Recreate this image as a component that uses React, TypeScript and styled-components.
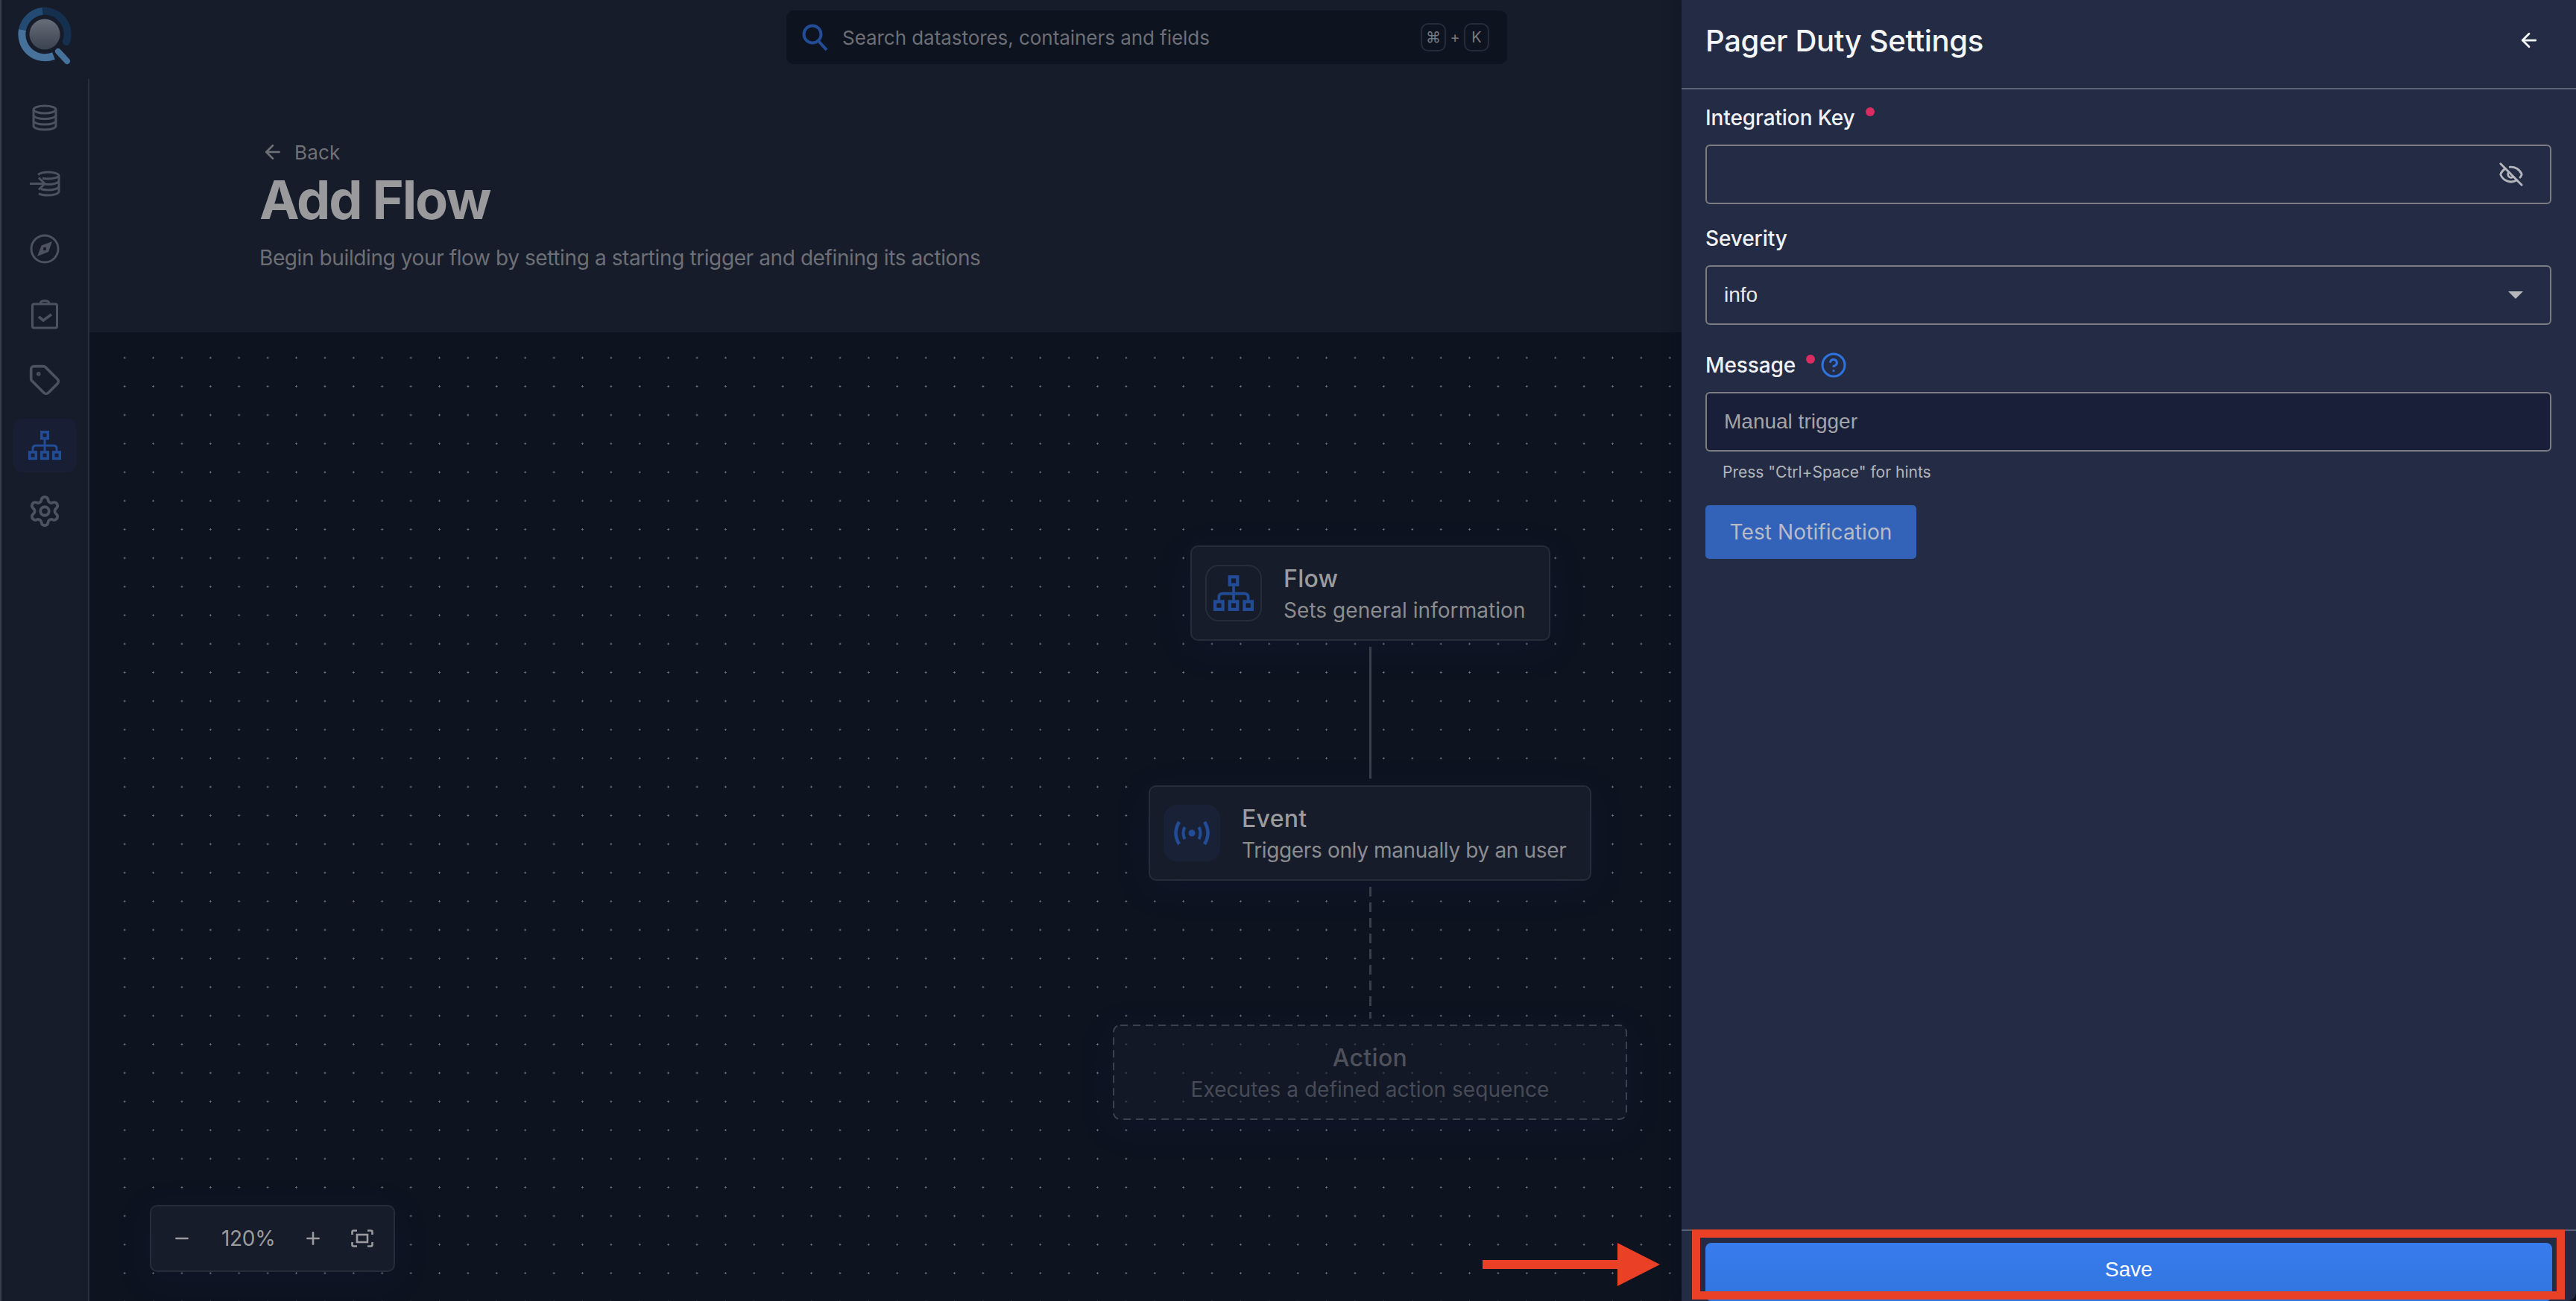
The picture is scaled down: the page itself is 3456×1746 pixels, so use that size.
import React from "react";
import styled, { createGlobalStyle } from "styled-components";
import { ArrowLeft, EyeOff, HelpCircle, Minus, Plus, Tag, Settings } from "lucide-react";

const GlobalStyle = createGlobalStyle`
  html, body {
    margin: 0;
    padding: 0;
    background: #0e1320;
  }
  * {
    box-sizing: border-box;
  }
`;

const UI_FONT = `Inter, "Noto Sans", "Liberation Sans", sans-serif`;
const FIELD_FONT = `"Liberation Sans", Arial, sans-serif`;

const SitemapIcon = ({ width = 44 }: { width?: number }) => (
  <svg width={width} height={width * 0.89} viewBox="0 0 44 39" fill="none" stroke="#234c96" strokeWidth="3.500">
    <rect x="17.750" y="1.750" width="8.500" height="8.500" />
    <rect x="1.750" y="28.750" width="8.500" height="8.500" />
    <rect x="17.750" y="28.750" width="8.500" height="8.500" />
    <rect x="33.750" y="28.750" width="8.500" height="8.500" />
    <path d="M22 12v15M6 27v-3q0-4 4-4h24q4 0 4 4v3" strokeWidth="3" />
  </svg>
);

const BroadcastIcon = () => (
  <svg width="50" height="34" viewBox="0 0 50 34" fill="none" stroke="#234c96" strokeWidth="4">
    <circle cx="25" cy="17" r="4.500" fill="#234c96" stroke="none" />
    <path d="M15.500 9q-4 8 0 16M34.500 9q4 8 0 16" />
    <path d="M8 2q-9 15 0 30M42 2q9 15 0 30" strokeWidth="4.500" />
  </svg>
);

const DatabaseIcon = () => (
  <svg width="34" height="36" viewBox="0 0 34 36" fill="none" stroke="#4d5160" strokeWidth="3">
    <ellipse cx="17" cy="7" rx="15" ry="5" />
    <path d="M2 7v22c0 2.800 6.700 5 15 5s15-2.200 15-5V7" />
    <path d="M2 14.500c0 2.800 6.700 5 15 5s15-2.200 15-5M2 22c0 2.800 6.700 5 15 5s15-2.200 15-5" />
  </svg>
);

const DatabaseInIcon = () => (
  <svg width="42" height="36" viewBox="0 0 42 36" fill="none" stroke="#4d5160" strokeWidth="3">
    <path d="M12 6.500c3-2.500 7-3.500 13-3.500 8.300 0 15 2 15 4.500s-6.700 4.500-15 4.500c-3 0-5-.2-7-.7" />
    <path d="M40 8v21c0 2.800-6.700 5-15 5-5 0-9-.8-12-2.200" />
    <path d="M40 14.500c0 2.800-6.700 5-15 5-2 0-3-.1-5-.4M40 22c0 2.800-6.700 5-15 5-3.500 0-6-.4-9-1.200" />
    <path d="M1 18.500h20M13 10.500l8 8-8 8" />
  </svg>
);

const CompassIcon = () => (
  <svg width="40" height="40" viewBox="0 0 40 40" fill="none">
    <circle cx="20" cy="20" r="18" stroke="#4d5160" strokeWidth="3" />
    <path d="M30 10l-5 14-15 6 5.500-14.500z" fill="#4d5160" />
    <circle cx="20" cy="20" r="2.200" fill="#161c2a" />
  </svg>
);

const ClipboardCheckIcon = () => (
  <svg width="36" height="40" viewBox="0 0 36 40" fill="none" stroke="#4d5160" strokeWidth="3">
    <rect x="1.500" y="6" width="33" height="32" rx="2" />
    <path d="M12 6q0-4.500 6-4.500t6 4.500" />
    <path d="M8 12v0M28 12v0" />
    <path d="M10 23l6 5 11-8" strokeWidth="3.600" />
  </svg>
);

const FitIcon = () => (
  <svg width="30" height="24" viewBox="0 0 30 24" fill="none" stroke="#9b9b9f" strokeWidth="2.600">
    <path d="M1.500 7V3.500q0-2 2-2H8M22 1.500h4.500q2 0 2 2V7M28.500 17v3.500q0 2-2 2H22M8 22.500H3.500q-2 0-2-2V17" />
    <rect x="8" y="7" width="14" height="10" />
  </svg>
);

const Logo = () => (
  <svg width="74" height="78" viewBox="0 0 74 78" fill="none">
    <defs>
      <linearGradient id="lens" x1="0" y1="0" x2="0" y2="1">
        <stop offset="0" stopColor="#686d78" />
        <stop offset="1" stopColor="#39424f" />
      </linearGradient>
    </defs>
    <circle cx="36" cy="36" r="20.500" fill="url(#lens)" />
    <path d="M65 46A31 31 0 0 0 33 5" stroke="#15304f" strokeWidth="10" strokeLinecap="round" />
    <path d="M33 5A31 31 0 0 0 6 30" stroke="#234a73" strokeWidth="10" />
    <path d="M6 30A31 31 0 0 0 48 65" stroke="#46719b" strokeWidth="10" />
    <path d="M54 59l12 13" stroke="#46719b" strokeWidth="8" strokeLinecap="round" />
  </svg>
);

const Shell = styled.div`
  position: relative;
  width: 3456px;
  height: 1746px;
  overflow: hidden;
  display: flex;
  flex-direction: column;
  border-left: 2px solid #3a3e4c;
  background: #161c2a;
  font-family: ${UI_FONT};
`;

const TopBar = styled.header`
  height: 106px;
  flex: none;
  display: flex;
  align-items: flex-start;
  background: #161c2a;
`;

const LogoSlot = styled.div`
  width: 118px;
  padding: 10px 0 0 22px;
  flex: none;
`;

const SearchBox = styled.div`
  margin: 14px 0 0 935px;
  width: 967px;
  height: 72px;
  display: flex;
  align-items: center;
  padding: 0 24px 0 21px;
  border-radius: 10px;
  background: #0e1320;
`;

const SearchText = styled.span`
  margin-left: 18px;
  flex: 1;
  font-size: 26px;
  letter-spacing: -0.05px;
  color: #6d6f76;
`;

const Key = styled.span`
  width: 34px;
  height: 38px;
  display: flex;
  align-items: center;
  justify-content: center;
  border: 2px solid #262b39;
  border-radius: 10px;
  font-size: 20px;
  color: #77797f;
`;

const KeyPlus = styled.span`
  width: 24px;
  text-align: center;
  font-size: 20px;
  color: #77797f;
`;

const Body = styled.div`
  flex: 1;
  display: flex;
  min-height: 0;
`;

const Sidebar = styled.nav`
  width: 118px;
  flex: none;
  display: flex;
  flex-direction: column;
  align-items: center;
  padding-top: 16px;
  border-right: 2px solid #2a2e3b;
  background: #161c2a;
`;

const NavItem = styled.div<{ $active?: boolean }>`
  width: 86px;
  height: 72px;
  margin-bottom: 16px;
  display: flex;
  align-items: center;
  justify-content: center;
  border-radius: 14px;
  color: #4d5160;
  background: ${(p) => (p.$active ? "#181f35" : "transparent")};
`;

const Main = styled.main`
  flex: 1;
  display: flex;
  flex-direction: column;
  min-width: 0;
`;

const PageHeader = styled.div`
  height: 340px;
  flex: none;
  padding: 82px 0 0 228px;
  background: #161c2a;
`;

const BackLink = styled.div`
  display: flex;
  align-items: center;
  gap: 14px;
  height: 32px;
  padding-left: 3px;
  font-size: 26px;
  letter-spacing: 0.2px;
  color: #6f7177;
`;

const PageTitle = styled.h1`
  margin: 4px 0 0;
  font-size: 72px;
  line-height: 88px;
  font-weight: 700;
  letter-spacing: -2.1px;
  color: #9a9a9c;
`;

const PageSubtitle = styled.p`
  margin: 15px 0 0;
  font-size: 28px;
  line-height: 38px;
  letter-spacing: -0.4px;
  color: #6d6f76;
`;

const Canvas = styled.section`
  position: relative;
  flex: 1;
  background: #0e1320;
`;

const DotGrid = styled.div`
  position: absolute;
  left: 28px;
  top: 15px;
  right: 0;
  bottom: 0;
  background-image: radial-gradient(circle, #6b6f78 1px, transparent 1.4px);
  background-size: 38.4px 38.4px;
`;

const FlowNode = styled.div<{ $x: number; $y: number; $w: number; $ghost?: boolean }>`
  position: absolute;
  left: ${(p) => p.$x}px;
  top: ${(p) => p.$y}px;
  width: ${(p) => p.$w}px;
  height: 128px;
  display: flex;
  align-items: center;
  gap: 29px;
  padding: 3px 18px 0;
  border-radius: 10px;
  border: 2px solid ${(p) => (p.$ghost ? "transparent" : "#282c3a")};
  background: ${(p) => (p.$ghost ? "rgba(22, 28, 42, 0.6)" : "#161c2a")};
  justify-content: ${(p) => (p.$ghost ? "center" : "flex-start")};
  text-align: ${(p) => (p.$ghost ? "center" : "left")};
  box-shadow: 0 10px 44px rgba(26, 34, 80, 0.2);
`;

const DashFrame = styled.svg`
  position: absolute;
  left: -2px;
  top: -2px;
  width: calc(100% + 4px);
  height: calc(100% + 4px);
`;

const NodeIcon = styled.div<{ $filled?: boolean }>`
  width: 76px;
  height: 76px;
  margin-top: -3px;
  flex: none;
  display: flex;
  align-items: center;
  justify-content: center;
  border-radius: 18px;
  border: 2px solid ${(p) => (p.$filled ? "transparent" : "#282c3a")};
  background: ${(p) => (p.$filled ? "#192136" : "transparent")};
`;

const NodeTitle = styled.div<{ $muted?: boolean }>`
  font-size: 32px;
  line-height: 42px;
  font-weight: 500;
  letter-spacing: 0.3px;
  color: ${(p) => (p.$muted ? "#4e515c" : "#9b9b9f")};
`;

const NodeSubtitle = styled.div<{ $muted?: boolean; $tight?: boolean }>`
  font-size: 28px;
  line-height: 42px;
  white-space: nowrap;
  letter-spacing: ${(p) => (p.$tight ? "-0.35px" : "0.05px")};
  color: ${(p) => (p.$muted ? "#474b57" : "#8b8c90")};
`;

const Edge = styled.div<{ $y: number; $dashed?: boolean }>`
  position: absolute;
  left: 1717px;
  top: ${(p) => p.$y}px;
  height: 177px;
  width: 3px;
  background: ${(p) =>
    p.$dashed
      ? "repeating-linear-gradient(#3b3f4b 0 13px, transparent 13px 21px)"
      : "#3b3f4b"};
`;

const ZoomControl = styled.div`
  position: absolute;
  left: 81px;
  bottom: 39px;
  width: 329px;
  height: 90px;
  display: flex;
  align-items: center;
  padding-left: 28px;
  border-radius: 10px;
  border: 2px solid #282c3a;
  background: #161c2a;
  color: #9b9b9f;
  box-shadow: 0 10px 44px rgba(26, 34, 80, 0.2);
`;

const ZoomValue = styled.span`
  width: 68px;
  margin: 0 42px 0 40px;
  font-size: 28px;
  letter-spacing: -0.3px;
  white-space: nowrap;
`;

const FitSlot = styled.span`
  display: flex;
  margin-left: 38px;
`;

const Drawer = styled.aside`
  position: absolute;
  top: 0;
  right: 0;
  bottom: 0;
  width: 1200px;
  display: flex;
  flex-direction: column;
  border-bottom-right-radius: 12px;
  background: #242c45;
  box-shadow: -6px 0 20px rgba(8, 12, 24, 0.25);
`;

const DrawerHeader = styled.div`
  height: 120px;
  flex: none;
  display: flex;
  align-items: center;
  justify-content: space-between;
  padding: 0 48px 10px 32px;
  border-bottom: 2px solid #5a6278;
`;

const DrawerTitle = styled.h2`
  margin: 0;
  font-size: 40px;
  font-weight: 500;
  letter-spacing: -0.35px;
  color: #f4f5f7;
`;

const DrawerBody = styled.div`
  flex: 1;
  padding: 16px 33px 0 32px;
`;

const Label = styled.div<{ $gap?: number }>`
  display: flex;
  height: 44px;
  margin-top: ${(p) => p.$gap ?? 0}px;
  align-items: center;
  font-size: 28px;
  font-weight: 500;
  letter-spacing: -0.1px;
  color: #f1f2f5;
`;

const Required = styled.span`
  width: 12px;
  height: 12px;
  margin: -16px 0 0 14px;
  border-radius: 50%;
  background: #d92c62;
`;

const HelpMark = styled.span`
  display: flex;
  margin-left: 7px;
  color: #2f73df;
`;

const Field = styled.div<{ $dark?: boolean }>`
  height: 80px;
  margin: 14px 0 24px;
  display: flex;
  align-items: center;
  justify-content: space-between;
  padding: 0 35px 0 23px;
  border: 2px solid #7b7c80;
  border-radius: 6px;
  background: ${(p) => (p.$dark ? "#191e39" : "transparent")};
  font-family: ${FIELD_FONT};
  font-size: 28px;
  color: ${(p) => (p.$dark ? "#a3a4a8" : "#e7e8eb")};
`;

const CaretDown = styled.span`
  width: 0;
  height: 0;
  margin-right: 1px;
  border-left: 10px solid transparent;
  border-right: 10px solid transparent;
  border-top: 10px solid #b5b7bc;
`;

const Hint = styled.div`
  margin: -10px 0 0 23px;
  font-size: 21px;
  line-height: 28px;
  color: #b3b5bb;
`;

const TestButton = styled.button`
  display: block;
  width: 283px;
  height: 72px;
  margin-top: 30px;
  border: none;
  border-radius: 5px;
  background: #3263b8;
  font-family: ${UI_FONT};
  font-size: 28px;
  letter-spacing: 0.1px;
  color: #b9bcc8;
`;

const DrawerFooter = styled.div`
  height: 96px;
  flex: none;
  padding: 16px 32px 0;
  border-top: 2px solid #5a6278;
`;

const SaveButton = styled.button`
  display: block;
  width: 100%;
  height: 78px;
  border: none;
  border-radius: 8px;
  background: linear-gradient(#377ced, #3175de);
  padding: 0 0 7px;
  font-family: ${FIELD_FONT};
  font-size: 28px;
  color: #ffffff;
`;

const Highlight = styled.div`
  position: absolute;
  left: 2268px;
  top: 1650px;
  width: 1171px;
  height: 94px;
  border: 11px solid #ea4025;
`;

const PointerArrow = styled.svg`
  position: absolute;
  left: 1985px;
  top: 1668px;
`;

const navIcons = [
  { key: "db", icon: <DatabaseIcon /> },
  { key: "in", icon: <DatabaseInIcon /> },
  { key: "compass", icon: <CompassIcon /> },
  { key: "checks", icon: <ClipboardCheckIcon /> },
  { key: "tag", icon: <Tag size={44} strokeWidth={2} /> },
  { key: "flow", icon: <SitemapIcon />, active: true },
  { key: "settings", icon: <Settings size={46} strokeWidth={2} /> },
];

export default function App() {
  return (
    <>
      <GlobalStyle />
      <Shell>
        <TopBar>
          <LogoSlot>
            <Logo />
          </LogoSlot>
          <SearchBox>
            <svg width="36" height="36" viewBox="0 0 36 36" fill="none" stroke="#234c96" strokeWidth="4">
              <circle cx="14" cy="14" r="11.500" />
              <path d="M22 23l11 12" />
            </svg>
            <SearchText>Search datastores, containers and fields</SearchText>
            <Key>⌘</Key>
            <KeyPlus>+</KeyPlus>
            <Key>K</Key>
          </SearchBox>
        </TopBar>
        <Body>
          <Sidebar>
            {navIcons.map((item) => (
              <NavItem key={item.key} $active={item.active}>
                {item.icon}
              </NavItem>
            ))}
          </Sidebar>
          <Main>
            <PageHeader>
              <BackLink>
                <ArrowLeft size={30} strokeWidth={2} />
                Back
              </BackLink>
              <PageTitle>Add Flow</PageTitle>
              <PageSubtitle>Begin building your flow by setting a starting trigger and defining its actions</PageSubtitle>
            </PageHeader>
            <Canvas>
              <DotGrid />
              <FlowNode $x={1477} $y={286} $w={483}>
                <NodeIcon>
                  <SitemapIcon width={54} />
                </NodeIcon>
                <div>
                  <NodeTitle>Flow</NodeTitle>
                  <NodeSubtitle>Sets general information</NodeSubtitle>
                </div>
              </FlowNode>
              <Edge $y={422} />
              <FlowNode $x={1421} $y={608} $w={594}>
                <NodeIcon $filled>
                  <BroadcastIcon />
                </NodeIcon>
                <div>
                  <NodeTitle>Event</NodeTitle>
                  <NodeSubtitle $tight>Triggers only manually by an user</NodeSubtitle>
                </div>
              </FlowNode>
              <Edge $y={744} $dashed />
              <FlowNode $x={1373} $y={929} $w={690} $ghost>
                <DashFrame viewBox="0 0 690 128" fill="none">
                  <rect x="1" y="1" width="688" height="126" rx="9" stroke="#3d414e" strokeWidth="2" strokeDasharray="10 7" />
                </DashFrame>
                <div>
                  <NodeTitle $muted>Action</NodeTitle>
                  <NodeSubtitle $muted>Executes a defined action sequence</NodeSubtitle>
                </div>
              </FlowNode>
              <ZoomControl>
                <Minus size={26} strokeWidth={2.4} />
                <ZoomValue>120%</ZoomValue>
                <Plus size={26} strokeWidth={2.4} />
                <FitSlot>
                  <FitIcon />
                </FitSlot>
              </ZoomControl>
            </Canvas>
          </Main>
        </Body>
        <Drawer>
          <DrawerHeader>
            <DrawerTitle>Pager Duty Settings</DrawerTitle>
            <ArrowLeft size={30} strokeWidth={2.2} color="#f4f5f7" />
          </DrawerHeader>
          <DrawerBody>
            <Label>
              Integration Key
              <Required />
            </Label>
            <Field>
              <span />
              <EyeOff size={34} strokeWidth={2} color="#b5b7bc" />
            </Field>
            <Label>Severity</Label>
            <Field>
              info
              <CaretDown />
            </Field>
            <Label $gap={32}>
              Message
              <Required />
              <HelpMark>
                <HelpCircle size={36} strokeWidth={2} />
              </HelpMark>
            </Label>
            <Field $dark>Manual trigger</Field>
            <Hint>Press "Ctrl+Space" for hints</Hint>
            <TestButton>Test Notification</TestButton>
          </DrawerBody>
          <DrawerFooter>
            <SaveButton>Save</SaveButton>
          </DrawerFooter>
        </Drawer>
        <Highlight />
        <PointerArrow width="240" height="58" viewBox="0 0 240 58">
          <path d="M2 23h181V0l57 29-57 29V35H2z" fill="#ea4025" />
        </PointerArrow>
      </Shell>
    </>
  );
}
